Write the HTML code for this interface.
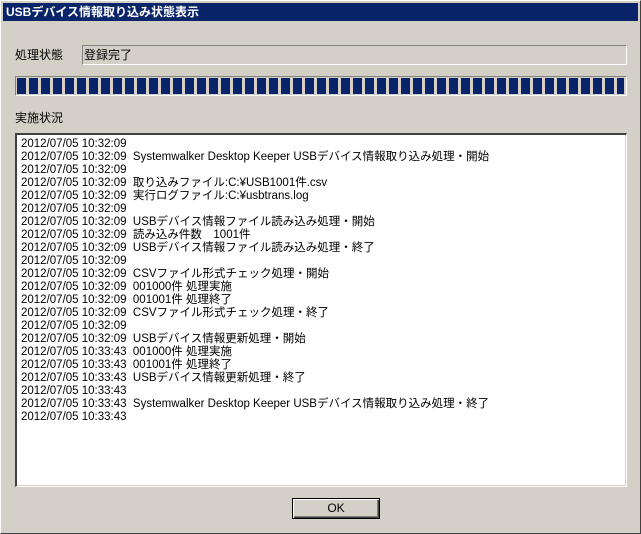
<!DOCTYPE html><html><head><meta charset="utf-8"><style>
body{margin:0;width:641px;height:534px;background:#d4d0c8;position:relative;overflow:hidden;font-family:"Liberation Sans","Noto Sans CJK JP",sans-serif;font-size:12px;color:#000}
.win{position:absolute;left:0;top:0;width:639px;height:532px;border-top:1px solid #fff;border-left:1px solid #fff;border-right:1px solid #404040;border-bottom:1px solid #404040}
.title{position:absolute;left:3px;top:3px;width:635px;height:18px;background:#0a246a;color:#fff;font-weight:bold;font-size:12px;line-height:18px;padding-left:3px;box-sizing:border-box}
.a{position:absolute}
.field{left:82px;top:45px;width:545px;height:20px;box-sizing:border-box;border-top:1px solid #808080;border-left:1px solid #808080;border-right:1px solid #fff;border-bottom:1px solid #fff;padding-left:1px;line-height:18px}
.prog{left:15px;top:76px;width:612px;height:20px;box-sizing:border-box;border-top:1px solid #808080;border-left:1px solid #808080;border-right:1px solid #fff;border-bottom:1px solid #fff}
.bars{position:absolute;left:1px;top:1px;width:607px;height:16px;background:repeating-linear-gradient(90deg,#0a246a 0 9px,transparent 9px 12px)}
.list{left:15px;top:133px;width:612px;height:354px;box-sizing:border-box;background:#fff;border-top:2px solid #404040;border-left:2px solid #404040;border-right:1px solid #fff;border-bottom:1px solid #fff;box-shadow:inset -1px -1px 0 #d4d0c8}
.list pre{margin:0;position:absolute;left:4px;top:3px;font-family:"Liberation Sans","Noto Sans CJK JP",sans-serif;font-size:11.5px;line-height:13px}
.btn{left:292px;top:498px;width:88px;height:21px;box-sizing:border-box;border:1px solid #000;background:#d4d0c8;box-shadow:inset 1px 1px 0 #fff,inset -1px -1px 0 #404040,inset -2px -2px 0 #808080;text-align:center;line-height:19px;font-size:12px}
</style></head><body>
<div class="win"></div>
<div class="title">USBデバイス情報取り込み状態表示</div>
<div class="a" style="left:15px;top:46px;line-height:18px">処理状態</div>
<div class="a field">登録完了</div>
<div class="a prog"><div class="bars"></div></div>
<div class="a" style="left:15px;top:110px;line-height:16px">実施状況</div>
<div class="a list"><pre>2012/07/05 10:32:09
2012/07/05 10:32:09  Systemwalker Desktop Keeper USBデバイス情報取り込み処理・開始
2012/07/05 10:32:09
2012/07/05 10:32:09  取り込みファイル:C:¥USB1001件.csv
2012/07/05 10:32:09  実行ログファイル:C:¥usbtrans.log
2012/07/05 10:32:09
2012/07/05 10:32:09  USBデバイス情報ファイル読み込み処理・開始
2012/07/05 10:32:09  読み込み件数　1001件
2012/07/05 10:32:09  USBデバイス情報ファイル読み込み処理・終了
2012/07/05 10:32:09
2012/07/05 10:32:09  CSVファイル形式チェック処理・開始
2012/07/05 10:32:09  001000件 処理実施
2012/07/05 10:32:09  001001件 処理終了
2012/07/05 10:32:09  CSVファイル形式チェック処理・終了
2012/07/05 10:32:09
2012/07/05 10:32:09  USBデバイス情報更新処理・開始
2012/07/05 10:33:43  001000件 処理実施
2012/07/05 10:33:43  001001件 処理終了
2012/07/05 10:33:43  USBデバイス情報更新処理・終了
2012/07/05 10:33:43
2012/07/05 10:33:43  Systemwalker Desktop Keeper USBデバイス情報取り込み処理・終了
2012/07/05 10:33:43</pre></div>
<div class="a btn">OK</div>
</body></html>
